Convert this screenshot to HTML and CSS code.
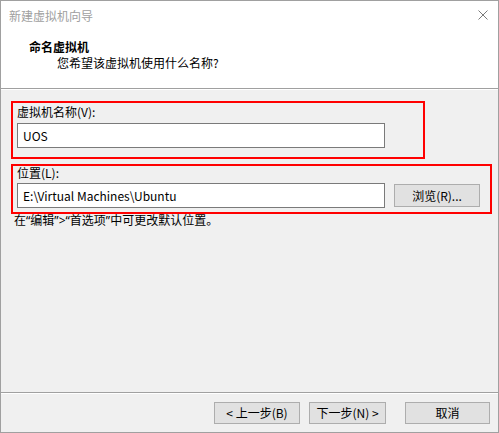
FILE: index.html
```html
<!DOCTYPE html>
<html lang="zh-CN">
<head>
<meta charset="utf-8">
<title>新建虚拟机向导</title>
<link rel="stylesheet" href="styles.css">
</head>
<body>
<div class="win">
  <div class="top">
    <div class="titlebar">
      <span class="title">新建虚拟机向导</span>
      <svg class="close" width="10" height="10" viewBox="0 0 10 10"><path d="M0.5 0.5 L9.5 9.5 M9.5 0.5 L0.5 9.5" stroke="#7a7a7a" stroke-width="1" fill="none"/></svg>
    </div>
    <div class="heading">命名虚拟机</div>
    <div class="sub">您希望该虚拟机使用什么名称?</div>
  </div>
  <div class="content">
    <div class="box box1">
      <div class="label">虚拟机名称(V):</div>
      <div class="input">UOS</div>
    </div>
    <div class="box box2">
      <div class="label label2">位置(L):</div>
      <div class="row">
        <div class="input">E:\Virtual Machines\Ubuntu</div>
        <div class="btn browse">浏览(R)...</div>
      </div>
    </div>
    <div class="hint">在<span class="q">“</span>编辑<span class="q">”&gt;“</span>首选项<span class="q">”</span>中可更改默认位置。</div>
  </div>
  <div class="footer">
    <div class="btn back">&lt; 上一步(B)</div>
    <div class="btn next">下一步(N) &gt;</div>
    <div class="btn cancel">取消</div>
  </div>
</div>
</body>
</html>
```
FILE: styles.css
```css
html, body {
  margin: 0;
  padding: 0;
  background: #f0f0f0;
}
body {
  font-family: "Noto Sans CJK SC", "Microsoft YaHei", sans-serif;
  font-size: 12px;
  color: #000;
}
.win {
  width: 499px;
  height: 433px;
  box-sizing: border-box;
  border: 1px solid #a0a0a0;
  background: #f0f0f0;
  display: flex;
  flex-direction: column;
}
.top {
  background: #fff;
  height: 88px;
  box-sizing: border-box;
  border-bottom: 1px solid #a0a0a0;
  box-shadow: 0 1px 0 #fff;
  flex: none;
}
.titlebar {
  height: 29px;
  display: flex;
  align-items: center;
  padding: 0 10px 0 8px;
}
.title {
  color: #a0a0a0;
  line-height: 29px;
  flex: 1;
}
.close {
  display: block;
  margin-top: -1px;
}
.heading {
  margin: 9px 0 0 28px;
  font-weight: bold;
  line-height: 16px;
}
.sub {
  margin-left: 56px;
  line-height: 16px;
}
.content {
  flex: 1;
  padding: 12px 0 0 10px;
}
.box {
  border: 2px solid #ff0000;
  box-sizing: border-box;
}
.box1 {
  width: 414px;
  height: 58px;
  padding: 1px 0 0 4px;
}
.box2 {
  width: 481px;
  height: 50px;
  margin-top: 5px;
  padding: 0 0 0 4px;
}
.label {
  line-height: 16px;
}
.label2 {
  line-height: 14px;
}
.input {
  margin-top: 3px;
  width: 368px;
  height: 25px;
  box-sizing: border-box;
  border: 1px solid #7a7a7a;
  background: #fff;
  padding-left: 5px;
  line-height: 23px;
}
.row {
  display: flex;
  align-items: center;
  margin-top: 3px;
}
.row .input {
  margin-top: 0;
}
.btn {
  box-sizing: border-box;
  border: 1px solid #adadad;
  background: #e1e1e1;
  height: 22px;
  line-height: 20px;
  text-align: center;
}
.browse {
  width: 86px;
  height: 23px;
  line-height: 21px;
  margin-left: 9px;
}
.hint {
  margin-left: 3px;
  line-height: 10px;
  margin-top: 1px;
}
.q {
  font-family: "Noto Sans", "DejaVu Sans", sans-serif;
}
.footer {
  flex: none;
  height: 40px;
  box-sizing: border-box;
  border-top: 1px solid #a0a0a0;
  box-shadow: inset 0 1px 0 #fff;
  display: flex;
  justify-content: flex-end;
  align-items: flex-start;
  padding: 9px 8px 0 0;
}
.back {
  width: 86px;
}
.next {
  width: 77px;
  margin-left: 9px;
}
.cancel {
  width: 85px;
  margin-left: 19px;
}
```
